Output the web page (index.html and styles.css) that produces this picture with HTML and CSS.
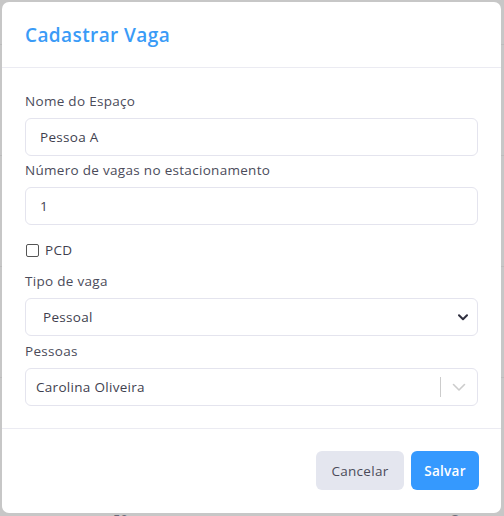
FILE: index.html
```html
<!DOCTYPE html>
<html lang="pt-BR">
<head>
<meta charset="utf-8">
<link rel="stylesheet" href="styles.css">
</head>
<body>
<div class="backdrop">
  <div class="bg-lines">
    <div class="bg-line"></div>
    <div class="bg-line"></div>
    <div class="bg-line"></div>
    <div class="bg-line"></div>
  </div>
  <div class="modal">
    <div class="modal-header">
      <h2 class="modal-title">Cadastrar Vaga</h2>
    </div>
    <div class="modal-body">
      <div class="field">
        <label class="label">Nome do Espaço</label>
        <div class="input">Pessoa A</div>
      </div>
      <div class="field">
        <label class="label">Número de vagas no estacionamento</label>
        <div class="input">1</div>
      </div>
      <div class="check-row">
        <span class="checkbox"></span>
        <span class="check-label">PCD</span>
      </div>
      <div class="field">
        <label class="label">Tipo de vaga</label>
        <div class="input select">
          <span class="select-value">Pessoal</span>
          <svg class="select-arrow" width="10" height="7" viewBox="0 0 10 7"><path d="M1 1.2 L5 5.2 L9 1.2" fill="none" stroke="#2f2f3f" stroke-width="2" stroke-linecap="round" stroke-linejoin="round"/></svg>
        </div>
      </div>
      <div class="field">
        <label class="label">Pessoas</label>
        <div class="input rselect">
          <span class="rselect-value">Carolina Oliveira</span>
          <span class="rselect-sep"></span>
          <span class="rselect-ind">
            <svg width="14" height="9" viewBox="0 0 14 9"><path d="M1.5 1.5 L7 7 L12.5 1.5" fill="none" stroke="#cccccc" stroke-width="1.6" stroke-linecap="round" stroke-linejoin="round"/></svg>
          </span>
        </div>
      </div>
    </div>
    <div class="modal-footer">
      <button class="btn btn-light">Cancelar</button>
      <button class="btn btn-primary">Salvar</button>
    </div>
  </div>
  <div class="peek">
    <span class="peek-a">50</span>
    <span class="peek-b">O</span>
  </div>
</div>
</body>
</html>
```

FILE: styles.css
```css
* { box-sizing: border-box; }
html, body {
  margin: 0;
  padding: 0;
  width: 504px;
  height: 516px;
  overflow: hidden;
}
body {
  font-family: "Open Sans", "Noto Sans", sans-serif;
  background: #c7c7c7;
}
.backdrop {
  position: relative;
  width: 504px;
  height: 516px;
  padding: 2px 3px 0 2px;
  background: #c7c7c7;
}
.bg-lines {
  position: absolute;
  left: 0;
  top: 0;
  width: 504px;
  height: 516px;
}
.bg-line {
  height: 1px;
  background: #bcbcbc;
  margin-top: 110px;
}
.bg-line:first-child { margin-top: 44px; }
.modal {
  position: relative;
  background: #fff;
  border-radius: 7px;
  height: 511px;
  display: flex;
  flex-direction: column;
}
.modal-header {
  height: 66px;
  border-bottom: 1px solid #ebebf2;
  padding: 0 23px;
  display: flex;
  align-items: center;
}
.modal-title {
  margin: 0;
  font-size: 19px;
  font-weight: 600;
  color: #3a9bf7;
  letter-spacing: 0.4px;
}
.modal-body {
  padding: 23px 23px 0 23px;
  height: 361px;
  border-bottom: 1px solid #ebebf2;
}
.field {
  display: flex;
  flex-direction: column;
}
.label {
  font-size: 13.5px;
  color: #4b4b5a;
  line-height: 20px;
  margin-bottom: 7px;
  letter-spacing: 0.3px;
}
.input {
  height: 38px;
  border: 1px solid #e4e4ee;
  border-radius: 6px;
  padding: 0 14px;
  display: flex;
  align-items: center;
  font-size: 13.5px;
  color: #3f3f4f;
  margin-bottom: 4px;
  letter-spacing: 0.3px;
}
.check-row {
  display: flex;
  align-items: center;
  height: 22px;
  margin-top: 10px;
  margin-bottom: 10px;
}
.checkbox {
  width: 13px;
  height: 13px;
  border: 1.3px solid #555;
  border-radius: 2px;
  margin-left: 1px;
  background: #fff;
}
.check-label {
  font-size: 13.5px;
  color: #3f3f4f;
  margin-left: 6px;
  letter-spacing: 0.3px;
}
.select {
  padding-left: 17px;
  padding-right: 9px;
  justify-content: space-between;
  margin-bottom: 5px;
}
.select-arrow { display: block; }
.rselect {
  padding: 0 0 0 10px;
  margin-bottom: 0;
}
.rselect-value {
  flex: 1;
}
.rselect-sep {
  width: 1px;
  height: 20px;
  background: #cccccc;
}
.rselect-ind {
  width: 36px;
  display: flex;
  align-items: center;
  justify-content: center;
}
.rselect-ind svg { display: block; }
.modal-footer {
  flex: 1;
  display: flex;
  justify-content: flex-end;
  align-items: flex-start;
  padding: 22px 22px 0 0;
  gap: 7px;
}
.btn {
  font-family: "Open Sans", "Noto Sans", sans-serif;
  font-size: 13.5px;
  height: 39px;
  border: none;
  border-radius: 6px;
  padding: 0 10px;
  cursor: pointer;
  letter-spacing: 0.3px;
}
.btn-light {
  background: #e4e6ef;
  color: #4b4b5a;
  width: 88px;
}
.btn-primary {
  background: #3599fe;
  color: #fff;
  font-weight: 600;
  width: 68px;
}
.peek {
  position: absolute;
  left: 0;
  top: 513px;
  width: 504px;
  height: 3px;
  overflow: hidden;
}
.peek-a, .peek-b {
  position: absolute;
  top: 0;
  font-size: 13px;
  color: #6a6a78;
  line-height: 13px;
}
.peek-a { left: 113px; }
.peek-b { left: 450px; }
```
